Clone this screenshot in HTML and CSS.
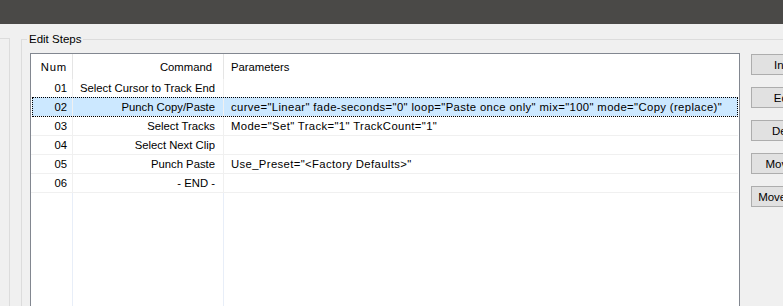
FILE: index.html
```html
<!DOCTYPE html>
<html>
<head>
<meta charset="utf-8">
<link rel="stylesheet" href="styles.css">
</head>
<body>
<div class="topbar"></div>
<div class="main">
  <div class="leftpanel"></div>
  <div class="group">
    <span class="group-label">Edit Steps</span>
    <div class="group-body">
      <div class="listbox">
        <div class="row header">
          <div class="cell c-num">Num</div>
          <div class="cell c-cmd">Command</div>
          <div class="cell c-par">Parameters</div>
        </div>
        <div class="row item">
          <div class="cell c-num">01</div>
          <div class="cell c-cmd">Select Cursor to Track End</div>
          <div class="cell c-par"></div>
        </div>
        <div class="row item selected">
          <div class="cell c-num">02</div>
          <div class="cell c-cmd">Punch Copy/Paste</div>
          <div class="cell c-par">curve="Linear" fade-seconds="0" loop="Paste once only" mix="100" mode="Copy (replace)"</div>
        </div>
        <div class="row item">
          <div class="cell c-num">03</div>
          <div class="cell c-cmd">Select Tracks</div>
          <div class="cell c-par">Mode="Set" Track="1" TrackCount="1"</div>
        </div>
        <div class="row item">
          <div class="cell c-num">04</div>
          <div class="cell c-cmd">Select Next Clip</div>
          <div class="cell c-par"></div>
        </div>
        <div class="row item">
          <div class="cell c-num">05</div>
          <div class="cell c-cmd">Punch Paste</div>
          <div class="cell c-par">Use_Preset="&lt;Factory Defaults&gt;"</div>
        </div>
        <div class="row item">
          <div class="cell c-num">06</div>
          <div class="cell c-cmd">- END -</div>
          <div class="cell c-par"></div>
        </div>
        <div class="row filler">
          <div class="cell c-num"></div>
          <div class="cell c-cmd"></div>
          <div class="cell c-par"></div>
        </div>
      </div>
      <div class="buttons">
        <button class="btn">Insert</button>
        <button class="btn">Edit...</button>
        <button class="btn">Delete</button>
        <button class="btn">Move Up</button>
        <button class="btn">Move Down</button>
      </div>
    </div>
  </div>
</div>
</body>
</html>
```

FILE: styles.css
```css
html, body {
  margin: 0;
  padding: 0;
  width: 783px;
  height: 306px;
  overflow: hidden;
  background: #f0f0f0;
  font-family: "Liberation Sans", Arial, sans-serif;
  font-size: 11.3px;
  color: #000;
}

.topbar {
  height: 24px;
  background: #4a4947;
}

.main {
  display: flex;
  align-items: flex-start;
}

.leftpanel {
  width: 9px;
  height: 300px;
  margin-top: 14px;
  border-top: 1px solid #dcdcdc;
  border-right: 1px solid #dcdcdc;
  flex: none;
}

.group {
  position: relative;
  flex: none;
  width: 900px;
  height: 300px;
  margin-top: 15px;
  margin-left: 11px;
  border: 1px solid #dcdcdc;
}

.group-label {
  position: absolute;
  left: 5px;
  top: -9px;
  padding: 0 2px;
  background: #f0f0f0;
  line-height: 16px;
  font-size: 11.5px;
}

.group-body {
  display: flex;
  align-items: flex-start;
  padding: 13px 0 0 8px;
  gap: 11px;
}

.listbox {
  flex: none;
  width: 708px;
  height: 280px;
  border: 1px solid #828790;
  background: #fff;
  display: flex;
  flex-direction: column;
}

.row {
  display: flex;
  flex: none;
}

.cell {
  flex: none;
  box-sizing: border-box;
  white-space: nowrap;
  overflow: hidden;
}

.c-num {
  width: 42px;
  text-align: right;
  padding-right: 5px;
  border-right: 1px solid #f0f0f0;
}

.c-cmd {
  width: 151px;
  text-align: right;
  padding-right: 8px;
  border-right: 1px solid #f0f0f0;
}

.c-par {
  flex: 1;
  padding-left: 7px;
}

.item .c-par {
  letter-spacing: 0.37px;
}

.header {
  height: 25px;
  line-height: 26px;
}

.header .c-num {
  letter-spacing: 0.8px;
}

.header .c-num,
.header .c-cmd {
  border-right-color: #e5e5e5;
}

.header .c-cmd {
  padding-right: 11px;
}

.item {
  height: 19px;
  line-height: 19px;
  border-bottom: 1px solid #f0f0f0;
  box-sizing: border-box;
  margin: 0 1px 0 0;
}

.item.selected {
  background: #cce8ff;
  outline: 1px dotted #000;
  outline-offset: -1px;
  margin-left: 1px;
  margin-top: -1px;
  height: 20px;
  padding-top: 1px;
}

.item.selected .c-num {
  width: 41px;
}

.filler {
  flex: 1;
}

.filler .c-num,
.filler .c-cmd {
  border-right-color: #e8eef8;
}

.buttons {
  display: flex;
  flex-direction: column;
  gap: 12px;
  margin-top: 1px;
}

.btn {
  width: 75px;
  height: 21px;
  box-sizing: border-box;
  background: #e1e1e1;
  border: 1px solid #adadad;
  font-family: inherit;
  font-size: 11.5px;
  color: #000;
  padding: 0;
  white-space: nowrap;
}
```
